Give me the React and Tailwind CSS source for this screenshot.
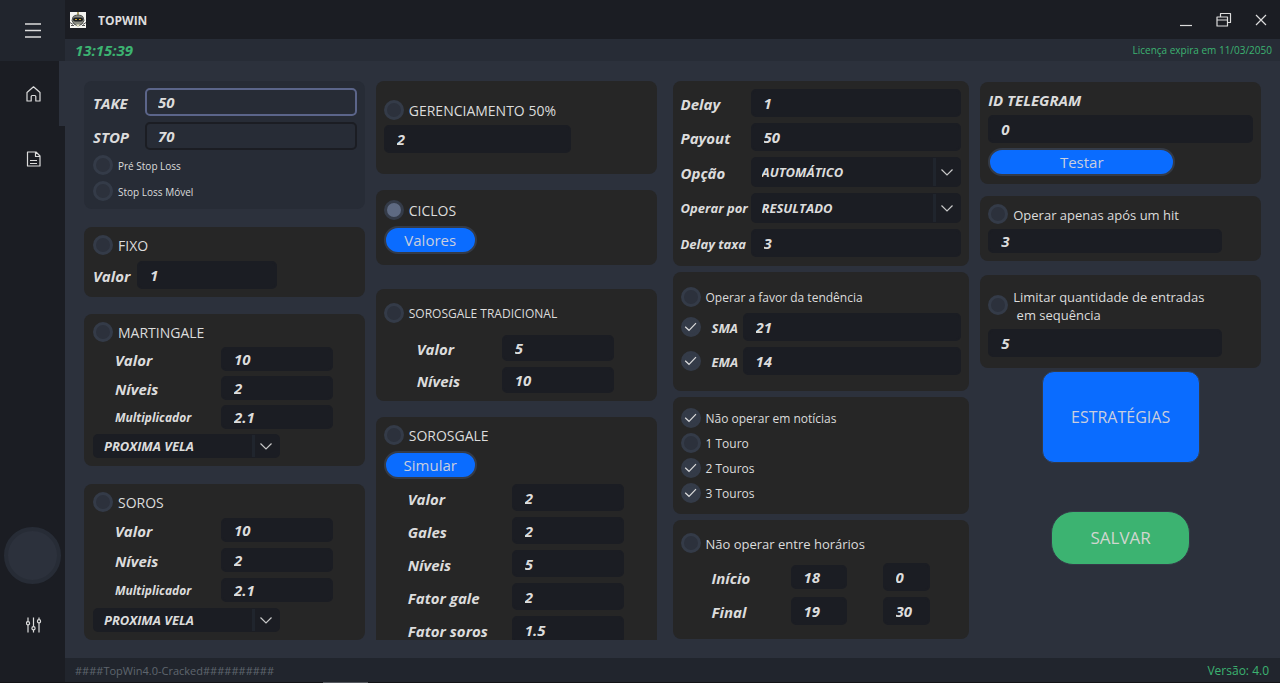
import React from 'react';

const Card = ({ className = 'bg-[#262626]', children }) => (
  <section className={`rounded-lg px-2 ${className}`}>{children}</section>
);

const Toggle = ({ type = 'radio', name, label, checked = false, size = 'text-sm', bare = false }) => (
  <label className={`flex items-center gap-[5px] ${size}`}>
    <span className="grid h-5 w-5 shrink-0 place-items-center">
      <input
        type={type}
        name={name}
        defaultChecked={checked}
        aria-label={bare ? label : undefined}
        className={`peer col-start-1 row-start-1 h-5 w-5 appearance-none rounded-full border-[3px] border-[#343b48] bg-[#2c313c] ${
          type === 'radio' ? 'checked:bg-[#5e6a82]' : 'checked:bg-[#343b48]'
        }`}
      />
      {type === 'checkbox' && (
        <svg
          viewBox="0 0 20 20"
          className="pointer-events-none invisible col-start-1 row-start-1 h-5 w-5 peer-checked:visible"
          fill="none"
          stroke="#dcdcdc"
          strokeWidth="1.2"
        >
          <path d="M4.200 9.800 8 13.300 15 6.200" />
        </svg>
      )}
    </span>
    {!bare && <span className="pt-0.5 leading-[18px] whitespace-pre">{label}</span>}
  </label>
);

const valueText = 'text-[15px] font-bold italic text-[#dcdcdc]';

const TextInput = ({ id, value, label, className }) => (
  <input
    id={id}
    type="text"
    aria-label={label}
    defaultValue={value}
    className={`min-w-0 rounded-[5px] border-2 border-[#1b1d23] px-[11px] outline-none focus:border-[#5b658a] ${valueText} ${className}`}
  />
);

// Label on the left, text box on the right
const Field = ({ id, label, value, labelClass, inputClass, size = 'text-[15px]' }) => (
  <div className="flex items-center">
    <label htmlFor={id} className={`shrink-0 pt-0.5 leading-5 font-bold italic ${size} ${labelClass}`}>
      {label}
    </label>
    <TextInput id={id} value={value} className={inputClass} />
  </div>
);

const Select = ({ id, label, value, className }) => (
  <div className={`grid min-w-0 items-center rounded-[5px] bg-[#1b1d23] ${className}`}>
    <select
      id={id}
      aria-label={label}
      defaultValue={value}
      className="col-start-1 row-start-1 h-full w-full appearance-none pt-px pl-[11px] text-[13px] font-bold italic outline-none"
    >
      <option>{value}</option>
    </select>
    <span className="pointer-events-none col-start-1 row-start-1 my-px flex w-7 items-center justify-center self-stretch justify-self-end border-l-[3px] border-[#20252d] pr-[3px]">
      <svg viewBox="0 0 14 14" className="h-[14px] w-[14px]" fill="none" stroke="#c8c8c8" strokeWidth="1.2">
        <path d="M1.500 4.500 7 10 12.500 4.500" />
      </svg>
    </span>
  </div>
);

const PillButton = ({ children, className }) => (
  <button
    type="button"
    className={`block h-7 rounded-full border-2 border-[#343b48] bg-[#0a6cff] text-[15px] leading-6 text-[#c8cede] ${className}`}
  >
    {children}
  </button>
);

const RobotLogo = () => (
  <svg viewBox="0 0 16 16" className="h-4 w-4">
    <rect width="16" height="16" fill="#f4f4f0" />
    <path d="M8 0v3" stroke="#8a7a30" strokeWidth="1.4" />
    <path d="M3 5C4 2.500 12 2.500 13 5L14 8.500 12 12 8 14 4 12 2 8.500Z" fill="#8b8d84" stroke="#4a4c4a" />
    <rect x="3" y="5.500" width="10" height="4" rx="2" fill="#1c1e20" />
    <path d="M5 7.500h2M9 7.500h2" stroke="#d0aa32" strokeWidth="1.2" />
    <path d="M0 10.500 3 12.500M16 10.500 13 12.500M1 13.500h3M12 13.500h3" stroke="#555" />
    <path d="M6 12.500h4l-2 2.500Z" fill="#e9e7c8" />
  </svg>
);

const Icon = ({ children }) => (
  <svg viewBox="0 0 16 16" className="h-4 w-4" fill="none" stroke="#dcdcdc" strokeWidth="1.2" strokeLinejoin="round">
    {children}
  </svg>
);

const Sidebar = () => (
  <nav className="flex w-[65px] shrink-0 flex-col bg-[#1b1d23]">
    <button type="button" aria-label="Menu" className="flex h-[61px] items-center justify-center bg-[#21252d]">
      <Icon>
        <path d="M0 1h16M0 7.500h16M0 14h16" strokeWidth="1.500" />
      </Icon>
    </button>
    <button
      type="button"
      aria-label="Home"
      className="flex h-[65px] items-center justify-center border-r-[6px] border-[#2c313c] pl-[9px]"
    >
      <Icon>
        <path d="M1 6.500 7.500.8 14 6.500V15H9.800V10.500a1 1 0 0 0-1-1H6.200a1 1 0 0 0-1 1V15H1Z" />
      </Icon>
    </button>
    <button type="button" aria-label="Logs" className="flex h-[65px] items-center justify-center pl-[2px]">
      <Icon>
        <path d="M1.500 1H10l4 4v10H1.500ZM9.500 1v4.500H14M4 9.500h7M4 12.500h7" />
      </Icon>
    </button>
    <div className="mt-auto h-[57px] w-[57px] self-center rounded-full border-4 border-[#272c36] bg-[#2c313c]" />
    <button type="button" aria-label="Ajustes" className="mt-2 mb-[25px] flex h-[65px] items-center justify-center pl-[2px]">
      <Icon>
        <path d="M2 .5v4M2 8v7.500M7.500.5v9M7.500 13v2.500M13 .5v2M13 6v9.500" />
        <circle cx="2" cy="6.200" r="1.600" />
        <circle cx="7.500" cy="11.200" r="1.600" />
        <circle cx="13" cy="4.200" r="1.600" />
      </Icon>
    </button>
  </nav>
);

const TitleBar = () => (
  <header className="flex h-[39px] shrink-0 items-center bg-[#1b1d23] pl-[5px]">
    <RobotLogo />
    <h1 className="ml-3 pt-0.5 text-xs font-bold">TOPWIN</h1>
    <div className="ml-auto flex">
      <button type="button" aria-label="Minimizar" className="flex h-9 w-[38px] items-center justify-center">
        <Icon>
          <path d="M2 13.500h12" />
        </Icon>
      </button>
      <button type="button" aria-label="Restaurar" className="flex h-9 w-[37px] items-center justify-center">
        <Icon>
          <path d="M1 5h10.500v9H1ZM1 8h10.500M4.500 4.500V1.500h10v9H12" />
        </Icon>
      </button>
      <button type="button" aria-label="Fechar" className="flex h-9 w-[38px] items-center justify-center">
        <Icon>
          <path d="M3 3l10 10M13 3 3 13" />
        </Icon>
      </button>
    </div>
  </header>
);

const StakeColumn = () => (
  <div className="flex flex-col justify-between">
    <Card className="bg-[#272c36] pt-[7px] pb-2 pl-[9px]">
      <div className="flex flex-col gap-[6px]">
        <div className="flex items-center">
          <label htmlFor="take" className="w-[52px] shrink-0 pt-0.5 text-[15px] leading-5 font-bold italic">TAKE</label>
          <input
            id="take"
            type="text"
            defaultValue="50"
            className={`h-7 min-w-0 flex-1 rounded-[5px] border-2 border-[#5b658a] px-[11px] outline-none ${valueText}`}
          />
        </div>
        <Field id="stop" label="STOP" value="70" labelClass="w-[52px]" inputClass="h-7 flex-1" />
      </div>
      <div className="mt-[5px] flex flex-col items-start gap-[6px]">
        <Toggle type="checkbox" label="Pré Stop Loss" size="text-[10px]" />
        <Toggle type="checkbox" label="Stop Loss Móvel" size="text-[10px]" />
      </div>
    </Card>

    <Card className="bg-[#262626] py-2 pl-[9px]">
      <Toggle name="strategy" label="FIXO" />
      <div className="mt-[6px]">
        <Field id="fixo" label="Valor" value="1" labelClass="w-[44px]" inputClass="h-7 w-[140px] bg-[#1b1d23]" />
      </div>
    </Card>

    <Card className="bg-[#262626] py-2 pl-[9px]">
      <Toggle name="strategy" label="MARTINGALE" />
      <div className="mt-[5px] flex flex-col gap-[5px]">
        <Field id="mg-valor" label="Valor" value="10" labelClass="w-32 pl-[22px]" inputClass="h-6 w-28 bg-[#1b1d23]" />
        <Field id="mg-niveis" label="Níveis" value="2" labelClass="w-32 pl-[22px]" inputClass="h-6 w-28 bg-[#1b1d23]" />
        <Field id="mg-mult" label="Multiplicador" value="2.1" size="text-xs" labelClass="w-32 pl-[22px]" inputClass="h-6 w-28 bg-[#1b1d23]" />
        <Select label="Entrada martingale" value="PROXIMA VELA" className="h-6 w-[187px]" />
      </div>
    </Card>

    <Card className="bg-[#262626] py-2 pl-[9px]">
      <Toggle name="strategy" label="SOROS" />
      <div className="mt-[6px] flex flex-col gap-[6px]">
        <Field id="soros-valor" label="Valor" value="10" labelClass="w-32 pl-[22px]" inputClass="h-6 w-28 bg-[#1b1d23]" />
        <Field id="soros-niveis" label="Níveis" value="2" labelClass="w-32 pl-[22px]" inputClass="h-6 w-28 bg-[#1b1d23]" />
        <Field id="soros-mult" label="Multiplicador" value="2.1" size="text-xs" labelClass="w-32 pl-[22px]" inputClass="h-6 w-28 bg-[#1b1d23]" />
        <Select label="Entrada soros" value="PROXIMA VELA" className="h-6 w-[187px]" />
      </div>
    </Card>
  </div>
);

const sorosgaleFields = [
  { id: 'sg-valor', label: 'Valor', value: '2' },
  { id: 'sg-gales', label: 'Gales', value: '2' },
  { id: 'sg-niveis', label: 'Níveis', value: '5' },
  { id: 'sg-fator-gale', label: 'Fator gale', value: '2' },
  { id: 'sg-fator-soros', label: 'Fator soros', value: '1.5' },
];

const CycleColumn = () => (
  <div className="flex h-full min-h-0 flex-col overflow-hidden">
    <Card className="shrink-0 bg-[#262626] pt-[19px] pb-[21px]">
      <Toggle name="strategy" label="GERENCIAMENTO 50%" />
      <div className="mt-[5px] flex">
        <TextInput label="Gerenciamento" value="2" className="h-7 w-[187px] bg-[#1b1d23]" />
      </div>
    </Card>

    <Card className="mt-4 shrink-0 bg-[#262626] pt-[10px] pb-[11px]">
      <Toggle name="strategy" label="CICLOS" checked />
      <PillButton className="mt-[6px] w-[93px]">Valores</PillButton>
    </Card>

    <Card className="mt-6 shrink-0 bg-[#262626] pt-[14px] pb-2">
      <Toggle name="strategy" label="SOROSGALE TRADICIONAL" size="text-xs" />
      <div className="mt-3 flex flex-col gap-[6px]">
        <Field id="st-valor" label="Valor" value="5" labelClass="w-[118px] pl-[33px]" inputClass="h-[26px] w-28 bg-[#1b1d23]" />
        <Field id="st-niveis" label="Níveis" value="10" labelClass="w-[118px] pl-[33px]" inputClass="h-[26px] w-28 bg-[#1b1d23]" />
      </div>
    </Card>

    <Card className="mt-4 shrink-0 bg-[#262626] py-2">
      <Toggle name="strategy" label="SOROSGALE" />
      <PillButton className="mt-[6px] w-[93px]">Simular</PillButton>
      <div className="mt-[5px] flex flex-col gap-[6px]">
        {sorosgaleFields.map((f) => (
          <Field
            key={f.id}
            id={f.id}
            label={f.label}
            value={f.value}
            labelClass="w-32 pl-6"
            inputClass="h-[27px] w-28 bg-[#1b1d23]"
          />
        ))}
      </div>
    </Card>
  </div>
);

const FilterColumn = () => (
  <div className="flex flex-col gap-[6px] pl-[5px]">
    <Card className="flex flex-col gap-[6px] bg-[#262626] pt-2 pb-[9px]">
      <Field id="delay" label="Delay" value="1" labelClass="w-[70px]" inputClass="h-7 flex-1 bg-[#1b1d23]" />
      <Field id="payout" label="Payout" value="50" labelClass="w-[70px]" inputClass="h-7 flex-1 bg-[#1b1d23]" />
      <div className="flex items-center">
        <label htmlFor="opcao" className="w-[70px] shrink-0 pt-0.5 text-[15px] leading-5 font-bold italic">Opção</label>
        <Select id="opcao" value="AUTOMÁTICO" className="h-[30px] flex-1" />
      </div>
      <div className="flex items-center">
        <label htmlFor="operar" className="w-[70px] shrink-0 text-[13px] leading-5 font-bold italic">Operar por</label>
        <Select id="operar" value="RESULTADO" className="h-[30px] flex-1" />
      </div>
      <Field id="delay-taxa" label="Delay taxa" value="3" size="text-[13px]" labelClass="w-[70px]" inputClass="h-7 flex-1 bg-[#1b1d23]" />
    </Card>

    <Card className="flex flex-col gap-[6px] bg-[#262626] pt-[15px] pb-4">
      <Toggle type="checkbox" label="Operar a favor da tendência" size="text-xs" />
      <div className="flex items-center gap-[11px]">
        <Toggle type="checkbox" label="Usar SMA" checked bare />
        <div className="flex-1">
          <Field id="sma" label="SMA" value="21" size="text-[13px]" labelClass="w-[31px]" inputClass="h-7 flex-1 bg-[#1b1d23]" />
        </div>
      </div>
      <div className="flex items-center gap-[11px]">
        <Toggle type="checkbox" label="Usar EMA" checked bare />
        <div className="flex-1">
          <Field id="ema" label="EMA" value="14" size="text-[13px]" labelClass="w-[31px]" inputClass="h-7 flex-1 bg-[#1b1d23]" />
        </div>
      </div>
    </Card>

    <Card className="flex flex-col items-start gap-[5px] bg-[#262626] pt-[11px] pb-[11px]">
      <Toggle type="checkbox" label="Não operar em notícias" checked size="text-xs" />
      <Toggle type="checkbox" label="1 Touro" size="text-xs" />
      <Toggle type="checkbox" label="2 Touros" checked size="text-xs" />
      <Toggle type="checkbox" label="3 Touros" checked size="text-xs" />
    </Card>

    <Card className="bg-[#262626] pt-[13px] pb-[14px]">
      <Toggle type="checkbox" label="Não operar entre horários" size="text-[13px]" />
      <div className="mt-[10px] flex flex-col gap-[6px]">
        <div className="flex items-center">
          <Field id="inicio" label="Início" value="18" labelClass="w-[110px] pl-[31px]" inputClass="h-6 w-14 bg-[#1b1d23]" />
          <TextInput label="Minuto inicial" value="0" className="ml-9 h-7 w-[47px] bg-[#1b1d23]" />
        </div>
        <div className="flex items-center">
          <Field id="final" label="Final" value="19" labelClass="w-[110px] pl-[31px]" inputClass="h-7 w-14 bg-[#1b1d23]" />
          <TextInput label="Minuto final" value="30" className="ml-9 h-7 w-[47px] bg-[#1b1d23]" />
        </div>
      </div>
    </Card>
  </div>
);

const ActionColumn = () => (
  <div className="flex flex-col">
    <Card className="mt-px bg-[#262626] py-2">
      <label htmlFor="telegram" className="block text-[15px] leading-5 font-bold italic">ID TELEGRAM</label>
      <div className="mt-[5px] flex">
        <TextInput id="telegram" value="0" className="h-7 flex-1 bg-[#1b1d23]" />
      </div>
      <PillButton className="mt-[5px] w-[187px]">Testar</PillButton>
    </Card>

    <Card className="mt-3 bg-[#262626] py-2">
      <Toggle type="checkbox" label="Operar apenas após um hit" size="text-[13px]" />
      <div className="mt-[5px] flex">
        <TextInput label="Quantidade após hit" value="3" className="h-6 w-[234px] bg-[#1b1d23]" />
      </div>
    </Card>

    <Card className="mt-[14px] bg-[#262626] py-[11px]">
      <Toggle type="checkbox" label={'Limitar quantidade de entradas\n em sequência'} size="text-[13px]" />
      <div className="mt-[5px] flex">
        <TextInput label="Limite de entradas" value="5" className="h-7 w-[234px] bg-[#1b1d23]" />
      </div>
    </Card>

    <button
      type="button"
      className="mt-[3px] h-[92px] w-[158px] self-center rounded-xl border border-[#343b48] bg-[#0a6cff] text-base text-[#c8cede]"
    >
      ESTRATÉGIAS
    </button>
    <button
      type="button"
      className="mt-12 h-[54px] w-[139px] self-center rounded-[22px] border border-[#343b48] bg-[#3cb371] text-[17px] text-[#d0d6d0]"
    >
      SALVAR
    </button>
  </div>
);

const App = () => {
  return (
    <div className="flex h-screen flex-col bg-[#121316] font-['Open_Sans','Noto_Sans',sans-serif] text-[#dcdcdc]">
      <div className="flex min-h-0 flex-1">
        <Sidebar />
        <div className="flex min-w-0 flex-1 flex-col bg-[#2c313c]">
          <TitleBar />
          <div className="flex h-[22px] shrink-0 items-center justify-between bg-[#272c36] pr-2 pl-[10px] text-[#3cb371]">
            <time className="text-[15px] leading-5 font-bold italic">13:15:39</time>
            <span className="text-[10px]">Licença expira em 11/03/2050</span>
          </div>

          <main className="grid min-h-0 flex-1 grid-cols-[281fr_281fr_302fr_281fr] grid-rows-[minmax(0,1fr)] gap-x-[11px] overflow-hidden px-[19px] pt-5 pb-[18px]">
            <StakeColumn />
            <CycleColumn />
            <FilterColumn />
            <ActionColumn />
          </main>

          <footer className="flex h-6 shrink-0 items-center justify-between bg-[#21252d] pr-[11px] pl-[10px]">
            <span className="pt-0.5 text-[11px] whitespace-nowrap text-[#5f656e]">####TopWin4.0-Cracked##########</span>
            <span className="pt-0.5 text-xs text-[#3cb371]">Versão: 4.0</span>
          </footer>
        </div>
      </div>
      <div className="flex h-px shrink-0">
        <div className="ml-[323px] w-[45px] bg-[#55585e]" />
      </div>
    </div>
  );
};

export default App;
